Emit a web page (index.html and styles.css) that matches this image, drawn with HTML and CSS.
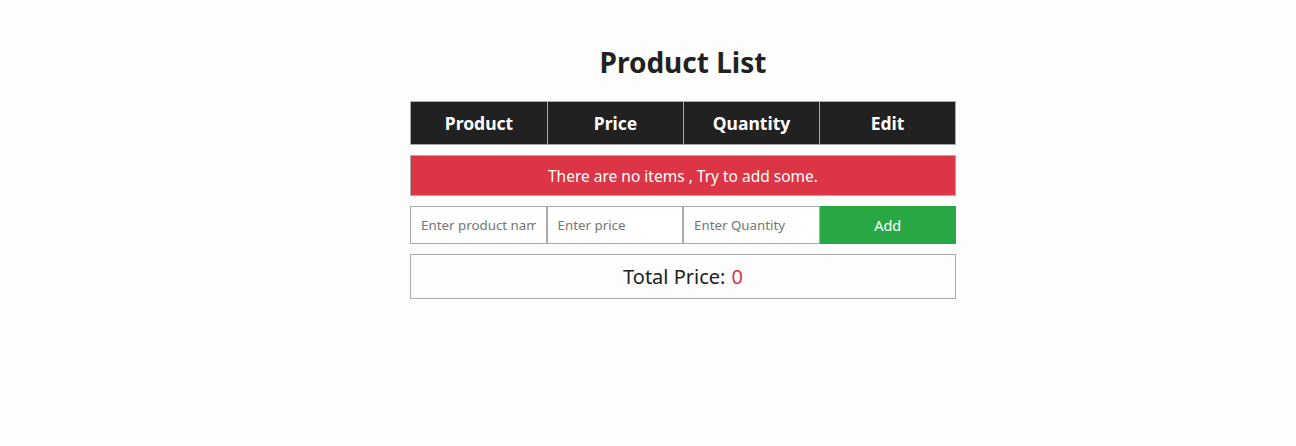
FILE: index.html
```html
<!DOCTYPE html>
<html>
<head>
<meta charset="utf-8">
<link rel="stylesheet" href="styles.css">
</head>
<body>
<div class="wrap">
  <h1 class="title">Product List</h1>
  <div class="head">
    <div class="hcell">Product</div>
    <div class="hcell">Price</div>
    <div class="hcell">Quantity</div>
    <div class="hcell">Edit</div>
  </div>
  <div class="alert">There are no items , Try to add some.</div>
  <div class="form">
    <input class="inp" type="text" placeholder="Enter product name">
    <input class="inp" type="text" placeholder="Enter price">
    <input class="inp" type="text" placeholder="Enter Quantity">
    <button class="add">Add</button>
  </div>
  <div class="total">Total Price: <span class="num">0</span></div>
</div>
</body>
</html>
```
FILE: styles.css
```css
* { box-sizing: border-box; }
body {
  margin: 0;
  background: #fdfdfd;
  font-family: "Noto Sans", sans-serif;
  color: #212121;
}
.wrap {
  width: 546px;
  margin-left: 410px;
  padding-top: 44px;
}
.title {
  margin: 0 0 20px;
  height: 37px;
  line-height: 37px;
  text-align: center;
  font-size: 28px;
  font-weight: bold;
  color: #212121;
}
.head {
  display: grid;
  grid-template-columns: repeat(4, 1fr);
  height: 44px;
  border: 1px solid #aaa;
  background: #212121;
}
.hcell {
  display: flex;
  align-items: center;
  justify-content: center;
  color: #fff;
  font-weight: bold;
  font-size: 17.5px;
  border-left: 1px solid #aaa;
}
.hcell:first-child { border-left: none; }
.alert {
  margin-top: 10px;
  height: 41px;
  background: #dc3545;
  border: 1px solid #aaa;
  color: #fff;
  font-size: 15.5px;
  display: flex;
  align-items: center;
  justify-content: center;
}
.form {
  margin-top: 10px;
  display: grid;
  grid-template-columns: repeat(4, 1fr);
  height: 38px;
}
.inp {
  width: 100%;
  min-width: 0;
  height: 38px;
  border: 1px solid #aaa;
  padding: 0 10px;
  font-family: "Noto Sans", sans-serif;
  font-size: 13.33px;
  color: #333;
  background: #fff;
  outline: none;
}
.inp::placeholder { color: #757575; }
.add {
  border: none;
  background: #28a745;
  color: #fff;
  font-family: "Noto Sans", sans-serif;
  font-size: 14.5px;
  height: 38px;
}
.total {
  margin-top: 10px;
  height: 45px;
  border: 1px solid #aaa;
  display: flex;
  align-items: center;
  justify-content: center;
  font-size: 20px;
  color: #212121;
}
.num { color: #dc3545; margin-left: 6px; }
```
